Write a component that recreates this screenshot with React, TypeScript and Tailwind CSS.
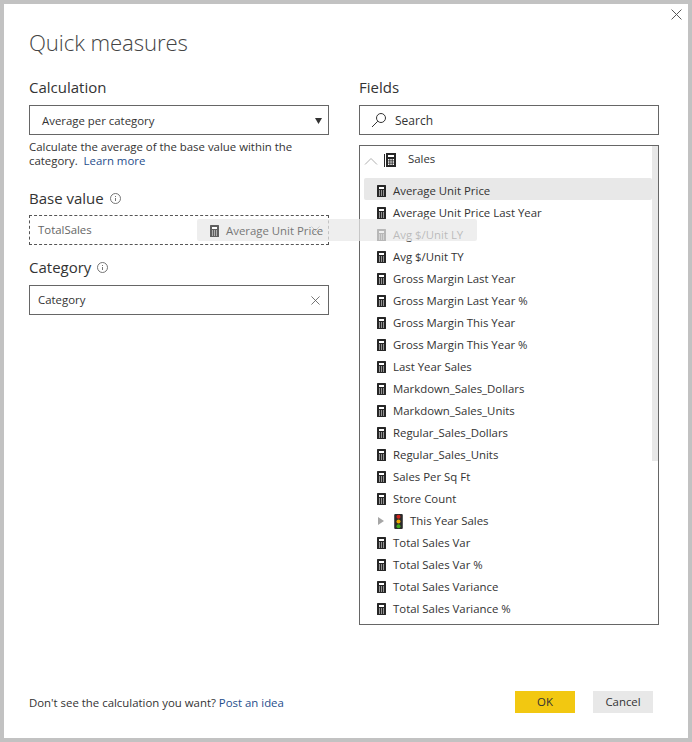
const fields = [
    'Average Unit Price',
    'Average Unit Price Last Year',
    'Avg $/Unit LY',
    'Avg $/Unit TY',
    'Gross Margin Last Year',
    'Gross Margin Last Year %',
    'Gross Margin This Year',
    'Gross Margin This Year %',
    'Last Year Sales',
    'Markdown_Sales_Dollars',
    'Markdown_Sales_Units',
    'Regular_Sales_Dollars',
    'Regular_Sales_Units',
    'Sales Per Sq Ft',
    'Store Count',
    'This Year Sales',
    'Total Sales Var',
    'Total Sales Var %',
    'Total Sales Variance',
    'Total Sales Variance %',
];

export default function App() {
    return (
        <div className="relative flex h-[742px] w-[692px] flex-col border-4 border-[#c2c2c2] bg-white font-['Open_Sans',sans-serif] text-[11.4px] text-[#333]">
            {/* Close button */}
            <div className="flex justify-end pr-[6px] pt-[5px]">
                <CloseIcon size={11} />
            </div>

            <h1 className="ml-[25px] mt-[5px] h-[36px] text-[22.2px] leading-[36px] font-light tracking-[-0.1px] text-[#444]">Quick measures</h1>

            <div className="ml-[25px] mt-[14px] flex flex-1 gap-[30px]">
                {/* Left column */}
                <div className="w-[300px]">
                    <Label>Calculation</Label>
                    <div className="flex h-[30px] items-center justify-between border border-[#666] pl-[12px] pr-[6px] pt-[1px]">
                        <span>Average per category</span>
                        <svg width="7" height="6" viewBox="0 0 7 6"><path d="M0 0h7L3.5 6z" fill="#333" /></svg>
                    </div>
                    <p className="mt-[5px] leading-[14px]">
                        Calculate the average of the base value within the category.&nbsp; <span className="text-[#1f4e8c]">Learn more</span>
                    </p>

                    <div className="mt-[18px] flex h-[24px] items-center gap-[6px] text-[15px]">
                        Base value <InfoIcon />
                    </div>
                    <div className="mt-[5px] flex h-[30px] items-center justify-between border border-dashed border-[#555] pl-[8px] pr-[8px] text-[#666]">
                        <span>TotalSales</span>
                        <CloseIcon size={9} />
                    </div>

                    <div className="mt-[10px] flex h-[24px] items-center gap-[6px] text-[15px]">
                        Category <InfoIcon />
                    </div>
                    <div className="mt-[6px] flex h-[30px] items-center justify-between border border-[#666] pl-[8px] pr-[8px]">
                        <span>Category</span>
                        <CloseIcon size={9} />
                    </div>
                </div>

                {/* Right column */}
                <div className="w-[300px]">
                    <Label>Fields</Label>
                    <div className="flex h-[30px] items-center gap-[8px] border border-[#666] pl-[11px] text-[12px]">
                        <svg width="16" height="16" viewBox="0 0 16 16" fill="none" stroke="#333" strokeWidth="1">
                            <circle cx="10" cy="6" r="4.5" />
                            <path d="M6.8 9.2 1 15" />
                        </svg>
                        <span className="pt-[1px]">Search</span>
                    </div>

                    <div className="relative mt-[10px] h-[480px] border border-[#666] pl-[4px] pt-[1px]">
                        <div className="absolute right-0 top-0 h-[315px] w-[6px] bg-[#e8e8e8]" />
                        <div className="flex h-[30px] items-start pt-[2px]">
                            <svg className="mt-[8px]" width="14" height="8" viewBox="0 0 14 8" fill="none" stroke="#b0b0b0"><path d="M1 7.5 7 1.5l6 6" /></svg>
                            <span className="ml-[6px] mt-[4px]"><CalcIcon large /></span>
                            <span className="ml-[12px] mt-[1px] leading-[18px]">Sales</span>
                        </div>
                        <ul className="mr-[6px] mt-[1px]">
                            {fields.map((name, i) => (
                                <li
                                    key={name}
                                    className={`flex h-[22px] items-center rounded-[2px] pt-[4px] ${i === 0 ? 'bg-[#e8e8e8]' : ''}`}
                                >
                                    {name === 'This Year Sales' ? (
                                        <>
                                            <svg className="ml-[14px]" width="6" height="8" viewBox="0 0 6 8"><path d="M0 0l6 4-6 4z" fill="#a6a6a6" /></svg>
                                            <span className="ml-[10px]"><Traffic /></span>
                                            <span className="ml-[7px]">{name}</span>
                                        </>
                                    ) : (
                                        <>
                                            <span className="ml-[13px]"><CalcIcon /></span>
                                            <span className="ml-[7px]">{name}</span>
                                        </>
                                    )}
                                </li>
                            ))}
                        </ul>
                    </div>
                </div>
            </div>

            {/* Footer */}
            <div className="mb-[25px] ml-[25px] mr-[35px] flex items-center justify-between">
                <p className="pt-[2px]">
                    Don't see the calculation you want? <span className="text-[#1f4e8c]">Post an idea</span>
                </p>
                <div className="flex gap-[18px]">
                    <button className="h-[22px] w-[60px] bg-[#f2c811]">OK</button>
                    <button className="h-[22px] w-[60px] bg-[#e8e8e8]">Cancel</button>
                </div>
            </div>

            {/* Drag ghost */}
            <div className="absolute left-[193px] top-[215px] flex h-[22px] w-[280px] items-center rounded-[2px] bg-[#e8e8e8]/75 pl-[13px] pt-[2px] text-[#777]">
                <CalcIcon muted />
                <span className="ml-[7px]">Average Unit Price</span>
            </div>
        </div>
    );
}

/* ─── Components ─── */

function Label({ children }: { children: string }) {
    return <div className="mb-[6px] h-[24px] text-[15px] leading-[24px]">{children}</div>;
}

function CloseIcon({ size }: { size: number }) {
    return (
        <svg width={size} height={size} viewBox="0 0 10 10" fill="none" stroke="#555" strokeWidth="0.9">
            <path d="M0.5 0.5l9 9M9.5 0.5l-9 9" />
        </svg>
    );
}

function InfoIcon() {
    return (
        <svg width="11" height="11" viewBox="0 0 11 11" fill="none" stroke="#666" strokeWidth="0.9">
            <circle cx="5.5" cy="5.5" r="5" />
            <path d="M5.5 5v3M5.5 3v1" />
        </svg>
    );
}

function CalcIcon({ large, muted }: { large?: boolean; muted?: boolean }) {
    const fill = muted ? '#5f5f5f' : '#262626';
    if (large) {
        return (
            <svg className="block" width="12" height="14" viewBox="0 0 12 14">
                <path d="M0 1h1v13H0z" fill={fill} />
                <path d="M2 0h10v14H2z" fill={fill} />
                <path d="M4 2h6v2H4z" fill="#fff" />
                <path d="M4 6h1.4v1.4H4zM6.3 6h1.4v1.4H6.3zM8.6 6H10v1.4H8.6zM4 8.3h1.4v1.4H4zM6.3 8.3h1.4v1.4H6.3zM8.6 8.3H10v1.4H8.6zM4 10.6h1.4V12H4zM6.3 10.6h1.4V12H6.3zM8.6 10.6H10V12H8.6z" fill="#fff" />
            </svg>
        );
    }
    return (
        <svg className="block" width="9" height="12" viewBox="0 0 9 12">
            <rect width="9" height="12" rx="0.5" fill={fill} />
            <path d="M2 2h5v2H2z" fill="#fff" />
            <path d="M2 5.5h1v1H2zM4 5.5h1v1H4zM6 5.5h1v1H6zM2 7.5h1v1H2zM4 7.5h1v1H4zM6 7.5h1v1H6zM2 9.5h1v1H2zM4 9.5h1v1H4zM6 9.5h1v1H6z" fill="#fff" />
        </svg>
    );
}

function Traffic() {
    return (
        <svg className="block" width="9" height="15" viewBox="0 0 8 14">
            <rect width="8" height="14" rx="1" fill="#2b2b2b" />
            <circle cx="4" cy="2.6" r="1.9" fill="#d2241c" />
            <circle cx="4" cy="7" r="1.9" fill="#f0a800" />
            <circle cx="4" cy="11.4" r="1.9" fill="#3fa81a" />
        </svg>
    );
}
